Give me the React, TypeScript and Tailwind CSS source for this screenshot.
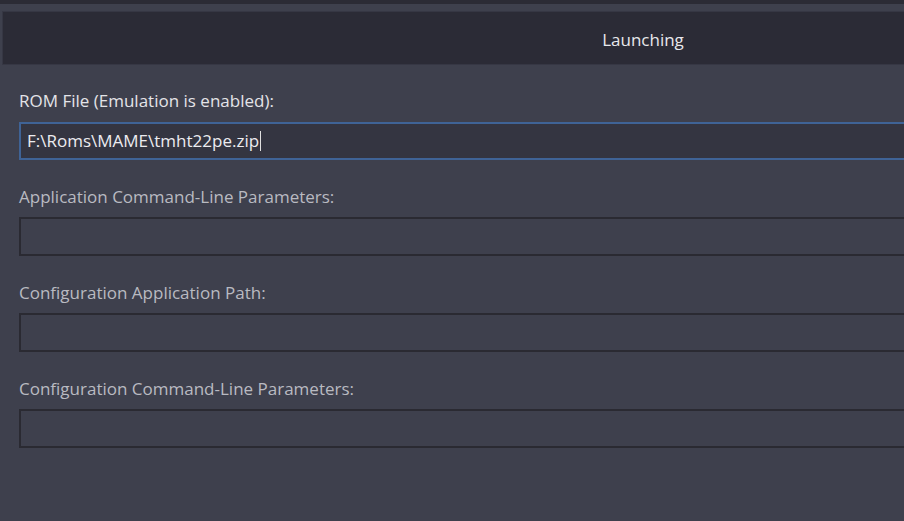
const fields = [
  { label: "Application Command-Line Parameters:", value: "" },
  { label: "Configuration Application Path:", value: "" },
  { label: "Configuration Command-Line Parameters:", value: "" },
];

export default function App() {
  return (
    <div
      className="h-[521px] w-full overflow-hidden bg-[#3e404d]"
      style={{ fontFamily: '"Open Sans", "Noto Sans", sans-serif' }}
    >
      <div className="h-[4px] w-full bg-[#2b2b35]" />

      {/* Section header */}
      <div className="ml-[2px] mt-[7px] flex h-[54px] w-[1282px] items-center justify-center border border-[#363744] bg-[#2b2b36] pt-[3px]">
        <span className="text-[17px] text-[#e8e8ec]">Launching</span>
      </div>

      <div className="w-[1284px] pl-[19px] pt-[25px]">
        <label className="block text-[17px] leading-[22px] text-[#e4e4e8]">
          ROM File (Emulation is enabled):
        </label>
        <div className="mt-[10px] flex h-[38px] items-center border-2 border-[#3f6396] bg-[#343541] pl-[6px] text-[17px] text-[#ececf0]">
          <span>F:\Roms\MAME\tmht22pe.zip</span>
          <span className="ml-[1px] h-[20px] w-px bg-[#e0e0e0]" />
        </div>

        {fields.map((f) => (
          <div key={f.label} className="mt-[26px]">
            <label className="block text-[17px] leading-[22px] text-[#b9bac1]">
              {f.label}
            </label>
            <div className="mt-[9px] h-[39px] border-2 border-[#2a2a32] bg-[#3e404d]" />
          </div>
        ))}
      </div>
    </div>
  );
}
